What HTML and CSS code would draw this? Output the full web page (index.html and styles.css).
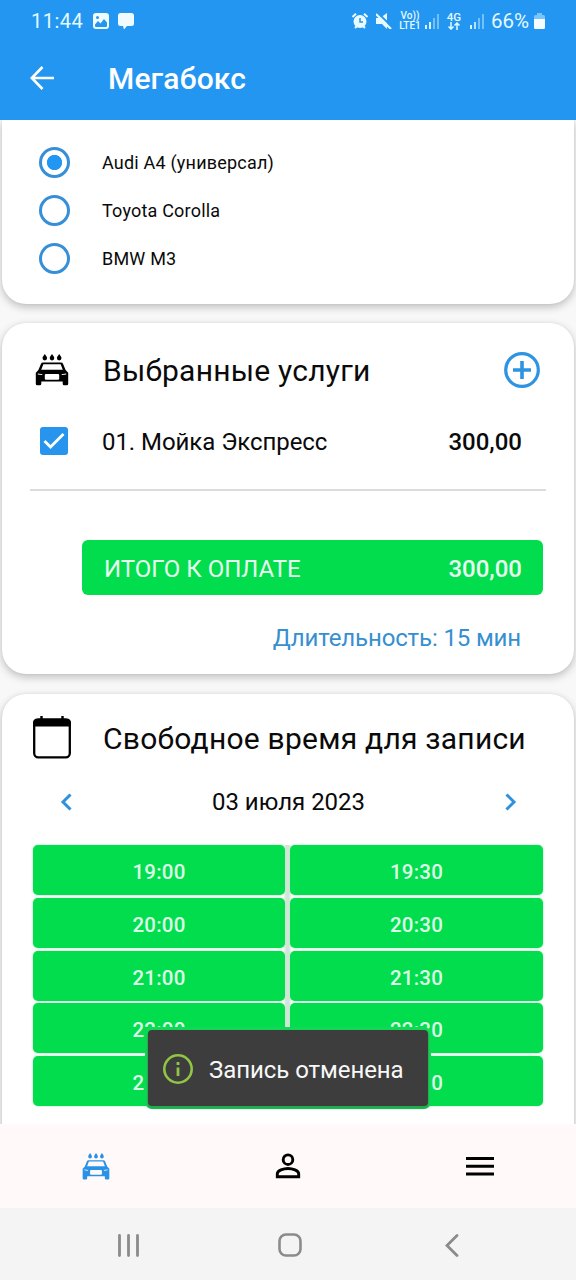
FILE: index.html
```html
<!DOCTYPE html>
<html lang="ru">
<head>
<meta charset="utf-8">
<title>Мегабокс</title>
<link rel="stylesheet" href="styles.css">
</head>
<body>
<svg class="defs" width="0" height="0" aria-hidden="true">
  <symbol id="carwash" viewBox="0 0 34 32">
    <path d="M9.800 0c1.200 1.800 2.300 2.800 2.300 4.100a2.300 2.300 0 0 1-4.600 0c0-1.300 1.100-2.300 2.300-4.100zM17 0c1.200 1.800 2.300 2.800 2.300 4.100a2.300 2.300 0 0 1-4.600 0c0-1.300 1.100-2.300 2.300-4.100zM24.200 0c1.200 1.800 2.300 2.800 2.300 4.100a2.300 2.300 0 0 1-4.600 0c0-1.300 1.100-2.300 2.300-4.100z"/>
    <path fill-rule="evenodd" d="M8 8.500h18q1.500 0 2 1.300L30.600 16l2.600 2.800v11q0 1.500-1.500 1.500h-2.400q-1.600 0-1.600-1.500V27.500H6.300v2.300q0 1.500-1.600 1.500H2.300Q.8 31.300.8 29.800v-11L3.400 16 6 9.800q.5-1.300 2-1.300zM8.400 10.200 6.200 15.800h21.600L25.600 10.200zM11 20q-1.200 0-1.200 1v3.700q0 1 1.200 1h12q1.200 0 1.200-1V21q0-1-1.200-1zM2.800 19.500v1l4.200.5.600-.8zM31.200 19.500v1L27 21l-.6-.8z"/>
  </symbol>
</svg>
<div class="screen">
  <header class="top">
    <div class="status">
      <span class="clock">11:44</span>
      <svg class="picture" width="16" height="16" viewBox="0 0 16 16"><rect width="16" height="16" rx="3" fill="#f0fbff"/><circle cx="4.500" cy="4.500" r="1.500" fill="#2496f0"/><path d="M2 11.500 5 8l2.500 2.500L11 6l3 3.500V13q0 1-1 1H3q-1 0-1-1z" fill="#2496f0"/></svg>
      <svg class="bubble" width="16" height="17" viewBox="0 0 16 17"><path d="M2.500 0h11Q16 0 16 2.500v8q0 2.500-2.500 2.500H9L6 16.500 5 13H2.500Q0 13 0 10.500v-8Q0 0 2.500 0z" fill="#f0fbff"/></svg>
      <span class="spacer"></span>
      <svg class="alarm" width="16" height="16" viewBox="0 0 16 16"><circle cx="8" cy="8.500" r="6.500" fill="#e9fbff"/><path d="M.5 4 4 .8M15.500 4 12 .8M3 15l2-2M13 15l-2-2" stroke="#e9fbff" stroke-width="2"/><path d="M8 5v4h3" fill="none" stroke="#2496f0" stroke-width="1.500"/></svg>
      <svg class="mute" width="16" height="16" viewBox="0 0 16 16"><path d="M0 5h4l7-5v16l-5-5H0z" fill="#e9fbff"/><path d="M1.500-.5l15 15" stroke="#2496f0" stroke-width="2"/><path d="M0 1l15 15" stroke="#e9fbff" stroke-width="2.200"/></svg>
      <span class="lte"><b>Vo))</b><b>LTE1</b></span>
      <svg class="signal first" width="14" height="15" viewBox="0 0 14 15" fill="#d6f5ff"><rect y="11" width="2" height="4"/><rect x="4" y="8" width="2" height="7"/><rect x="8" y="4" width="2" height="11" opacity=".45"/><rect x="12" width="2" height="15" opacity=".45"/></svg>
      <span class="four"><b>4G</b><svg width="12" height="8" viewBox="0 0 12 8"><path d="M3 0v7M.5 4.500 3 7l2.500-2.500M9 8V1M6.500 3.500 9 1l2.500 2.500" stroke="#e3faff" stroke-width="1.500" fill="none"/></svg></span>
      <svg class="signal second" width="14" height="15" viewBox="0 0 14 15" fill="#d6f5ff"><rect y="11" width="2" height="4"/><rect x="4" y="8" width="2" height="7" opacity=".8"/><rect x="8" y="4" width="2" height="11" opacity=".45"/><rect x="12" width="2" height="15" opacity=".45"/></svg>
      <span class="percent">66%</span>
      <svg class="battery" width="11" height="16" viewBox="0 0 11 16"><path d="M3 0h5v2h1.500Q11 2 11 3.500V7H0V3.500Q0 2 1.500 2H3z" fill="#79c4fb"/><path d="M0 6h11v8.500q0 1.500-1.500 1.500h-8Q0 16 0 14.500z" fill="#f4fcff"/></svg>
    </div>
    <div class="appbar">
      <svg width="24" height="24" viewBox="0 0 24 24"><path d="M12.500 1 1.800 12l10.700 11M2 12h22" fill="none" stroke="#fff" stroke-width="2.600"/></svg>
      <h1>Мегабокс</h1>
    </div>
  </header>
  <main class="content">
    <section class="card cars">
      <label class="car"><i class="radio on"></i><span>Audi A4 (универсал)</span></label>
      <label class="car"><i class="radio"></i><span>Toyota Corolla</span></label>
      <label class="car"><i class="radio"></i><span>BMW M3</span></label>
    </section>
    <section class="card services">
      <div class="heading">
        <svg class="wash" width="34" height="32"><use href="#carwash"/></svg>
        <h2>Выбранные услуги</h2>
        <svg class="plus" width="36" height="36" viewBox="0 0 36 36" fill="none" stroke="#2e93e0"><circle cx="18" cy="18" r="16.300" stroke-width="3.200"/><path d="M18 9v18M9 18h18" stroke-width="3.600"/></svg>
      </div>
      <div class="item">
        <svg width="28" height="28" viewBox="0 0 28 28"><rect width="28" height="28" rx="3" fill="#2795ee"/><path d="m4.500 14 6 6L23.500 7" fill="none" stroke="#fff" stroke-width="2.800"/></svg>
        <span class="name">01. Мойка Экспресс</span>
        <span class="price">300,00</span>
      </div>
      <div class="total"><span class="sum">ИТОГО К ОПЛАТЕ</span><span class="price">300,00</span></div>
      <div class="duration"><span>Длительность: 15 мин</span></div>
    </section>
    <section class="card times">
      <div class="heading">
        <svg class="cal" width="38" height="43" viewBox="0 0 38 43"><path d="M8.500 0v5M29.500 0v5" stroke="#000" stroke-width="2.400"/><rect x="1.200" y="3.700" width="35.600" height="37.600" rx="4" fill="none" stroke="#000" stroke-width="2.300"/><path d="M0 10.500V7q0-4.500 4.500-4.500h29Q38 2.500 38 7v3.500z"/></svg>
        <h2>Свободное время для записи</h2>
      </div>
      <div class="date">
        <svg width="12" height="18" viewBox="0 0 12 18"><path d="M10.500 1.500 3 9l7.500 7.500" fill="none" stroke="#2e91de" stroke-width="3"/></svg>
        <span>03 июля 2023</span>
        <svg width="12" height="18" viewBox="0 0 12 18"><path d="M1.500 1.500 9 9l-7.500 7.500" fill="none" stroke="#2e91de" stroke-width="3"/></svg>
      </div>
      <div class="slots">
        <span>19:00</span><span>19:30</span><span>20:00</span><span>20:30</span><span>21:00</span><span>21:30</span><span>22:00</span><span>22:30</span><span>23:00</span><span>23:30</span>
      </div>
    </section>
  </main>
  <nav class="tabs">
    <svg class="tab-wash" width="28" height="27" viewBox="0 0 34 32" preserveAspectRatio="none"><use href="#carwash" width="34" height="32"/></svg>
    <svg width="26" height="26" viewBox="0 0 26 26" fill="none" stroke="#000" stroke-width="2.900"><circle cx="13" cy="6.700" r="4.800"/><path d="M2.300 23.700v-2.900c0-3.300 6.300-5.300 10.700-5.300s10.700 2 10.700 5.300v2.900z"/></svg>
    <svg width="28" height="19" viewBox="0 0 28 19"><path d="M0 1.500h28M0 9.300h28M0 17.100h28" stroke="#000" stroke-width="3"/></svg>
  </nav>
  <footer class="system">
    <svg width="22" height="23" viewBox="0 0 22 23"><path d="M1.500 1.500v20M10.500 1.500v20M19.500 1.500v20" stroke="#8b8b8b" stroke-width="2.800" stroke-linecap="round"/></svg>
    <svg class="home" width="24" height="24" viewBox="0 0 24 24"><rect x="1.500" y="1.500" width="21" height="21" rx="6.500" fill="none" stroke="#8b8b8b" stroke-width="2.600"/></svg>
    <svg width="14" height="23" viewBox="0 0 14 23"><path d="M12 1.500 2 11.500l10 10" fill="none" stroke="#8b8b8b" stroke-width="2.800" stroke-linecap="round"/></svg>
  </footer>
  <div class="toast">
    <svg width="30" height="30" viewBox="0 0 30 30" fill="none" stroke="#90c545"><circle cx="15" cy="15" r="13.700" stroke-width="2.600"/><path d="M15 8v3M15 13.500V22" stroke-width="2.800"/></svg>
    <span>Запись отменена</span>
  </div>
</div>
</body>
</html>
```

FILE: styles.css
```css
* { box-sizing: border-box; }
body { margin: 0; font-family: Roboto, "Noto Sans", sans-serif; color: #0a0a0a; }
svg { display: block; flex: none; }
h1, h2 { margin: 0; }
.defs { position: absolute; }
.screen { position: relative; width: 576px; height: 1280px; overflow: hidden; display: flex; flex-direction: column; background: #f8f8f8; white-space: nowrap; }

.top { flex: none; height: 120px; background: #2396f2; color: #fff; }
.status { display: flex; align-items: center; height: 42px; padding: 0 31px; color: #e3faff; }
.clock { width: 62px; font-size: 20px; letter-spacing: .5px; }
.bubble { margin-left: 9px; }
.spacer { flex: 1; }
.mute { margin-left: 8px; }
.lte { width: 22px; margin-left: 7px; font-size: 10px; line-height: 10px; display: flex; flex-direction: column; align-items: center; }
.lte b, .four b { font-weight: 500; }
.signal.first { margin-left: 4px; }
.four { display: flex; flex-direction: column; align-items: center; width: 14px; margin-left: 8px; font-size: 11.500px; line-height: 10px; }
.signal.second { margin-left: 9px; }
.percent { margin-left: 7px; width: 43px; font-size: 20.500px; }
.appbar { display: flex; align-items: center; height: 72px; padding-left: 30px; gap: 54px; }
.appbar h1 { padding-top: 2px; font-size: 30px; line-height: 36px; font-weight: 500; letter-spacing: .15px; }

.content { flex: none; height: 1004px; overflow: hidden; padding: 0 2px; }
.card { background: #fff; border-radius: 24px; box-shadow: 0 3px 8px rgba(0, 0, 0, .24), 0 0 2px rgba(0, 0, 0, .08); }
.cars { height: 184px; margin-bottom: 19px; padding: 18px 0 0 37px; border-radius: 0 0 24px 24px; }
.car { display: flex; align-items: center; height: 48px; gap: 32px; font-size: 18px; letter-spacing: .2px; }
.car span { padding-top: 1px; }
.radio { width: 31px; height: 31px; border: 3px solid #368fd7; border-radius: 50%; }
.radio.on { background: radial-gradient(circle, #2196f3 7.200px, transparent 8px); }

.services { height: 351px; margin-bottom: 20px; }
.heading { display: flex; align-items: center; }
.heading h2 { font-weight: 400; font-size: 30px; line-height: 36px; letter-spacing: .23px; }
.services .heading { height: 94px; padding: 0 34px 0 33px; }
.services .heading h2 { padding-top: 2px; }
.wash { margin-right: 34px; }
.plus { margin-left: auto; }
.item { display: flex; align-items: center; height: 74px; margin: 0 28px; padding: 0 24px 24px 10px; border-bottom: 2px solid #dcdcdc; font-size: 24px; }
.item span { padding-top: 2px; }
.item .name { margin-left: 34px; letter-spacing: -.06px; }
.price { margin-left: auto; font-weight: 500; font-size: 24px; }
.total { display: flex; align-items: center; height: 55px; margin: 49px 31px 0 80px; padding: 2px 21px 0 22px; border-radius: 6px; background: #02dd4d; color: #e8fff0; font-size: 24px; }
.duration { display: flex; justify-content: flex-end; padding: 29px 53px 0 0; font-size: 24px; line-height: 28px; color: #368fd0; letter-spacing: -.14px; }

.times { height: 460px; padding: 0 31px; }
.times .heading { height: 88px; }
.times .heading h2 { padding-top: 1px; }
.cal { margin: -2px 32px 0 0; }
.date { display: flex; align-items: center; justify-content: space-between; height: 40px; padding: 0 26px 0 27px; font-size: 24px; }
.slots { display: grid; grid-template-columns: 252px 253px; grid-auto-rows: 50px; gap: 2.800px 5px; margin: 23px 0 0; background: linear-gradient(90deg, #fff 250px, #d2e6d8 253px, #d2e6d8 256px, #fff 259px); }
.slots span { display: flex; align-items: center; justify-content: center; padding-top: 4px; border-radius: 5px; background: #02dd4d; box-shadow: 0 0 2px #8ce9aa; color: #dcffe8; font-size: 20.500px; font-weight: 500; letter-spacing: .2px; }

.tabs { display: flex; align-items: center; justify-content: space-between; flex: none; height: 84px; padding: 0 82px; background: #fffaf9; }
.tab-wash { fill: #2b91e6; }
.system { display: flex; align-items: center; justify-content: space-between; flex: none; height: 72px; padding: 2px 117px 0 118px; background: #f4f4f4; }
.home { margin-right: 6px; }

.toast { position: absolute; left: 148px; top: 1030px; width: 280px; height: 76px; display: flex; align-items: center; gap: 16px; padding: 2px 0 0 15px; border-radius: 4px; background: #3d3d3d; box-shadow: 0 2px 2px 1px rgba(60, 70, 60, .3), 0 0 0 3px #13d856; color: #f8f8f8; font-size: 24px; letter-spacing: -.06px; }
.toast span { padding-top: 2px; }
```
